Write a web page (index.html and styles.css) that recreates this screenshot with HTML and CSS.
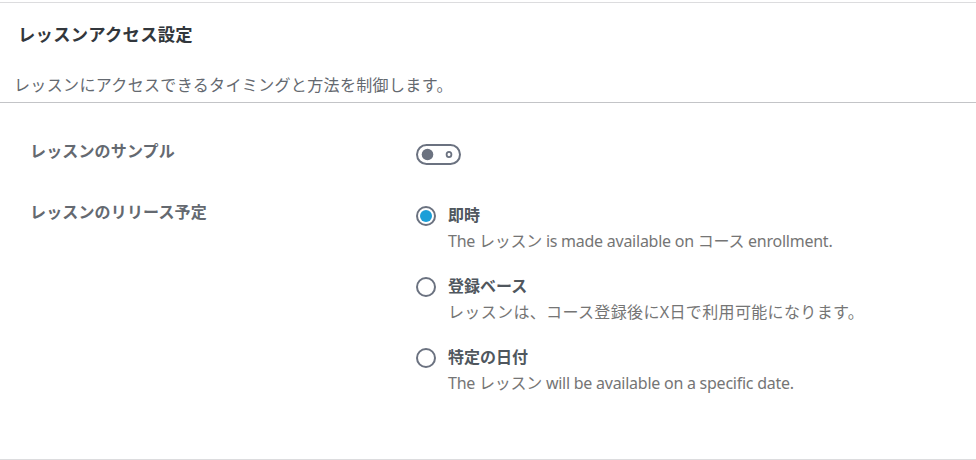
FILE: index.html
```html
<!DOCTYPE html>
<html lang="ja">
<head>
<meta charset="utf-8">
<link rel="stylesheet" href="styles.css">
</head>
<body>
<div class="panel">
  <div class="head">
    <h2 class="title">レッスンアクセス設定</h2>
    <p class="desc ja">レッスンにアクセスできるタイミングと方法を制御します。</p>
  </div>
  <div class="body">
    <div class="row row-sample">
      <div class="label">レッスンのサンプル</div>
      <div class="control">
        <svg class="toggle" width="46" height="22" viewBox="0 0 46 22">
          <rect x="1" y="1" width="43" height="19" rx="9.5" fill="#fff" stroke="#6b7280" stroke-width="2"/>
          <circle cx="11.5" cy="10.5" r="5.8" fill="#6b7280"/>
          <ellipse cx="33" cy="10.5" rx="2.4" ry="2.6" fill="none" stroke="#6b7280" stroke-width="1.8"/>
        </svg>
      </div>
    </div>
    <div class="row">
      <div class="label">レッスンのリリース予定</div>
      <div class="control options">
        <div class="opt">
          <span class="radio checked"></span>
          <div class="opt-text">
            <div class="opt-label">即時</div>
            <div class="opt-desc en">The レッスン is made available on コース enrollment.</div>
          </div>
        </div>
        <div class="opt">
          <span class="radio"></span>
          <div class="opt-text">
            <div class="opt-label">登録ベース</div>
            <div class="opt-desc ja">レッスンは、コース登録後にX日で利用可能になります。</div>
          </div>
        </div>
        <div class="opt">
          <span class="radio"></span>
          <div class="opt-text">
            <div class="opt-label">特定の日付</div>
            <div class="opt-desc en">The レッスン will be available on a specific date.</div>
          </div>
        </div>
      </div>
    </div>
  </div>
</div>
</body>
</html>
```
FILE: styles.css
```css
* { box-sizing: border-box; }
html, body { margin: 0; padding: 0; background: #fff; }
body {
  font-family: "Noto Sans", "Noto Sans CJK JP", sans-serif;
  font-size: 16px;
  color: #50575e;
}
.panel {
  margin-top: 2px;
  border-top: 1px solid #dcdcde;
  border-bottom: 1px solid #dcdcde;
  height: 458px;
}
.head {
  border-bottom: 1px solid #c3c4c7;
  height: 100px;
  padding-top: 20px;
}
.title {
  margin: 0 0 0 18px;
  font-size: 17.3px;
  font-weight: 700;
  color: #32373c;
  line-height: 24px;
  letter-spacing: 0.3px;
}
.desc {
  margin: 27px 0 0 14px;
  font-size: 16px;
  line-height: 22px;
  color: #646970;
}
.ja { letter-spacing: 0.35px; }
.en { letter-spacing: -0.25px; }
.body {
  padding-top: 37px;
}
.row {
  display: flex;
  padding-left: 30px;
}
.row-sample {
  margin-bottom: 35px;
}
.label {
  width: 386px;
  flex: none;
  font-weight: 700;
  color: #646970;
  line-height: 22px;
  letter-spacing: 0.15px;
}
.control { padding-top: 4px; }
.toggle { display: block; }
.options {
  display: flex;
  flex-direction: column;
  gap: 20px;
  padding-top: 0;
}
.opt {
  display: flex;
  align-items: flex-start;
}
.radio {
  width: 20px;
  height: 20px;
  border: 2px solid #6b7280;
  border-radius: 50%;
  flex: none;
  margin-top: 4.5px;
  margin-right: 12px;
  display: flex;
  align-items: center;
  justify-content: center;
}
.radio.checked::after {
  content: "";
  width: 12px;
  height: 12px;
  border-radius: 50%;
  background: #1a9fd8;
}
.opt-label {
  font-weight: 700;
  color: #50575e;
  line-height: 28px;
}
.opt-desc {
  color: #757575;
  line-height: 22px;
  margin-top: 1px;
}
```
